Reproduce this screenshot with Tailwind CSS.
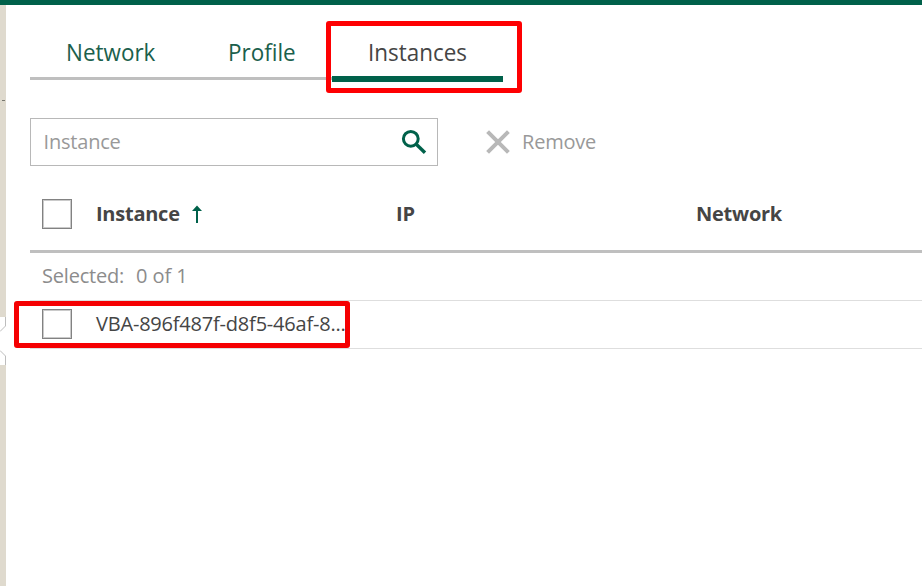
<!DOCTYPE html>
<html lang="en">
<head>
<meta charset="utf-8">
<title>Instances</title>
<script src="https://cdn.jsdelivr.net/npm/@tailwindcss/browser@4"></script>
</head>
<body class="bg-white">
<div class="relative flex flex-col w-[922px] h-[586px] overflow-hidden bg-white font-['Open_Sans','Noto_Sans',sans-serif] text-[#454545]">
  <div class="h-[5px] shrink-0 bg-[#00614a]"></div>
  <div class="flex flex-1 min-h-0">
    <aside class="flex flex-col w-[6px] shrink-0 bg-[#dfdace]">
      <div class="mt-[95px] ml-[2px] h-px w-[3px] bg-[#77776f]"></div>
      <svg class="mt-[216px] shrink-0" width="6" height="48" viewBox="0 0 6 48" fill="none"><rect width="6" height="48" fill="#fff"/><path d="M5.5 0V9L0 14.500M5.500 48V39L0 33.500" stroke="#bdbdbd"/></svg>
    </aside>
    <main class="flex flex-col flex-1 min-w-0 pl-6">
      <nav class="flex h-[77px] text-2xl whitespace-nowrap">
        <div class="flex w-[302px] h-[75px] border-b-[3px] border-[#bfbfbf] text-[#1b604c]">
          <div class="w-[162px] pl-9 pt-[31px] leading-8"><span class="inline-block origin-left scale-x-[0.935]">Network</span></div>
          <div class="pl-9 pt-[31px] leading-8"><span class="inline-block origin-left scale-x-[0.935]">Profile</span></div>
        </div>
        <div class="w-[171px] h-[77px] border-b-[6px] border-[#00614a] pl-9 pt-[31px] leading-8"><span class="inline-block origin-left scale-x-[0.935]">Instances</span></div>
      </nav>
      <div class="mt-9 flex items-center h-12 text-xl text-[#999]">
        <div class="flex items-center justify-between w-[408px] h-12 border border-[#b8b8b8] pl-[12.500px] pr-[10px]">
          <span class="tracking-[-0.2px]">Instance</span>
          <svg width="26" height="26" viewBox="0 0 26 26" fill="none" stroke="#00614a" stroke-width="3"><circle cx="9.800" cy="9.800" r="7.400"/><path d="M15 15L24 23.800" stroke-width="3.400"/></svg>
        </div>
        <svg class="ml-12" width="24" height="24" viewBox="0 0 24 24" stroke="#b8b8b8" stroke-width="4"><path d="M1.600 1.600L22.400 22.400M22.400 1.600L1.600 22.400"/></svg>
        <span class="ml-3 tracking-[-0.2px]">Remove</span>
      </div>
      <div class="mt-[7px] flex items-center h-20 border-b-[3px] border-[#bfbfbf] pt-[5px] pl-3 text-xl font-bold">
        <div class="w-[30px] h-[30px] border border-[#828282] inset-ring inset-ring-[#cacaca]"></div>
        <div class="flex items-center w-[300px] ml-6"><span class="tracking-[-0.25px]">Instance</span>
          <svg class="ml-[11px]" width="12" height="19" viewBox="0 0 12 19"><path d="M6 0.500L11 6H1Z M5 5.500H7V18H5Z" fill="#00614a"/></svg>
        </div>
        <div class="w-[300px] tracking-[-0.2px]">IP</div>
        <div class="tracking-[-0.25px]">Network</div>
      </div>
      <div class="flex items-center h-12 pl-3 pb-px border-b border-[#dedede] text-xl text-[#8c8c8c]"><span class="tracking-[-0.2px]">Selected:</span><span class="ml-3 tracking-[-0.1px]">0 of 1</span></div>
      <div class="flex items-center h-12 pl-3 pb-px border-b border-[#dedede] text-xl">
        <div class="w-[30px] h-[30px] border border-[#828282] inset-ring inset-ring-[#cacaca]"></div>
        <div class="w-[252px] ml-6 whitespace-nowrap tracking-[-0.2px]">VBA-896f487f-d8f5-46af-8...</div>
      </div>
    </main>
  </div>
  <div class="absolute left-[326px] top-[21px] w-[196px] h-[72px] border-[5px] border-[#fe0002] rounded-[3px]"></div>
  <div class="absolute left-[14px] top-[301px] w-[336px] h-[47px] border-[5px] border-[#f50002] rounded-[3px]"></div>
</div>
</body>
</html>
